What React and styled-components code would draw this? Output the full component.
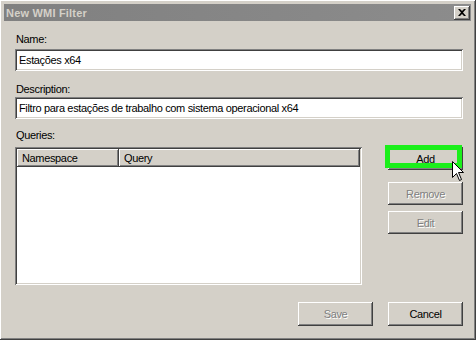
import React from 'react';
import styled, { createGlobalStyle } from 'styled-components';

const GlobalStyle = createGlobalStyle`
    html, body {
        margin: 0;
        padding: 0;
        background: #d4d0c8;
    }
    body {
        font-family: "Liberation Sans", Arial, sans-serif;
        font-size: 11px;
        letter-spacing: -0.35px;
        color: #000;
    }
`;

const raised = `
    box-shadow: inset -1px -1px #404040, inset 1px 1px #ffffff,
        inset -2px -2px #808080, inset 2px 2px #d4d0c8;
`;

const sunken = `
    box-shadow: inset 1px 1px #808080, inset -1px -1px #ffffff,
        inset 2px 2px #404040, inset -2px -2px #d4d0c8;
`;

const Window = styled.div`
    width: 476px;
    height: 340px;
    box-sizing: border-box;
    padding: 4px 5px 3px 4px;
    background: #d4d0c8;
    display: flex;
    flex-direction: column;
    ${raised}
`;

const TitleBar = styled.div`
    height: 17px;
    display: flex;
    align-items: center;
    justify-content: space-between;
    padding: 0 1px 0 2px;
    background: linear-gradient(to right, #808080, #8c8c8c);
`;

const Title = styled.span`
    font-weight: bold;
    color: #d4d0c8;
    font-size: 11px;
    letter-spacing: 0.2px;
`;

const CloseButton = styled.div`
    width: 16px;
    height: 14px;
    display: flex;
    align-items: center;
    justify-content: center;
    background: #d4d0c8;
    ${raised}
`;

const Content = styled.div`
    flex: 1;
    display: flex;
    flex-direction: column;
    padding: 12px 8px 0 11px;
`;

const Label = styled.div`
    line-height: 13px;
    height: 13px;
    padding-left: 1px;
    margin-top: ${(p) => p.$top || 0}px;
    margin-bottom: ${(p) => p.$gap || 2}px;
`;

const TextBox = styled.div`
    height: 22px;
    box-sizing: border-box;
    padding: 0 4px;
    display: flex;
    align-items: center;
    background: #fff;
    white-space: nowrap;
    overflow: hidden;
    ${sunken}
`;

const QueriesRow = styled.div`
    display: flex;
    gap: 26px;
`;

const ListView = styled.div`
    width: 347px;
    height: 138px;
    box-sizing: border-box;
    padding: 2px;
    background: #fff;
    ${sunken}
`;

const ListHeader = styled.div`
    display: flex;
    height: 18px;
`;

const HeaderCell = styled.div`
    width: ${(p) => (p.$width ? `${p.$width}px` : 'auto')};
    flex: ${(p) => (p.$width ? 'none' : 1)};
    display: flex;
    align-items: center;
    padding-left: 5px;
    box-sizing: border-box;
    background: #d4d0c8;
    ${raised}
`;

const ButtonColumn = styled.div`
    display: flex;
    flex-direction: column;
    width: 75px;
`;

const Button = styled.div`
    position: relative;
    width: 75px;
    height: 23px;
    box-sizing: border-box;
    display: flex;
    align-items: center;
    justify-content: center;
    margin-top: ${(p) => p.$top || 0}px;
    background: #d4d0c8;
    color: ${(p) => (p.$disabled ? '#808080' : '#000')};
    text-shadow: ${(p) => (p.$disabled ? '1px 1px #ffffff' : 'none')};
    ${raised}
`;

const Highlight = styled.div`
    position: absolute;
    left: -3px;
    top: -2px;
    width: 77px;
    height: 23px;
    box-sizing: border-box;
    border: 5px solid #1bef1b;
    pointer-events: none;
`;

const Cursor = styled.svg`
    position: absolute;
    left: 64px;
    top: 14px;
`;

const Footer = styled.div`
    display: flex;
    justify-content: flex-end;
    gap: 15px;
    margin-top: 17px;
`;

const FooterButton = styled(Button)`
    height: 24px;
`;

function App() {
    return (
        <>
            <GlobalStyle />
            <Window>
                <TitleBar>
                    <Title>New WMI Filter</Title>
                    <CloseButton>
                        <svg width="8" height="7" viewBox="0 0 8 7">
                            <path d="M0 0h2l2 2 2-2h2L5 3.5 8 7H6L4 5 2 7H0l3-3.5z" fill="#000" />
                        </svg>
                    </CloseButton>
                </TitleBar>
                <Content>
                    <Label $gap={3}>Name:</Label>
                    <TextBox>Estações x64</TextBox>
                    <Label $top={12} $gap={1}>Description:</Label>
                    <TextBox>Filtro para estações de trabalho com sistema operacional x64</TextBox>
                    <Label $top={10} $gap={5}>Queries:</Label>
                    <QueriesRow>
                        <ListView>
                            <ListHeader>
                                <HeaderCell $width={102}>Namespace</HeaderCell>
                                <HeaderCell>Query</HeaderCell>
                            </ListHeader>
                        </ListView>
                        <ButtonColumn>
                            <Button>
                                Add
                                <Highlight />
                                <Cursor width="13" height="21" viewBox="0 0 13 21">
                                    <path
                                        d="M0.5 0.5 L0.5 16.5 L4.5 12.5 L7.5 19.5 L9.5 18.5 L6.5 11.5 L11.5 11.5 Z"
                                        fill="#fff"
                                        stroke="#000"
                                        strokeWidth="1"
                                    />
                                </Cursor>
                            </Button>
                            <Button $top={12} $disabled>Remove</Button>
                            <Button $top={6} $disabled>Edit</Button>
                        </ButtonColumn>
                    </QueriesRow>
                    <Footer>
                        <FooterButton $disabled>Save</FooterButton>
                        <FooterButton>Cancel</FooterButton>
                    </Footer>
                </Content>
            </Window>
        </>
    );
}

export default App;
